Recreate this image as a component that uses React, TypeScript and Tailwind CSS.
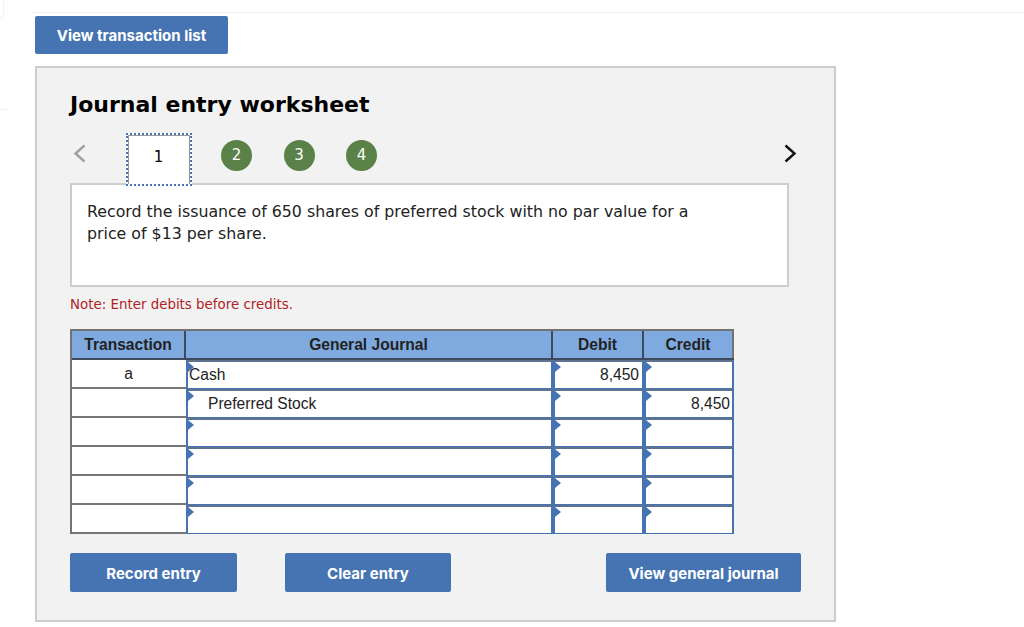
const rows = [
  { tx: "a", account: "Cash", indent: false, debit: "8,450", credit: "" },
  { tx: "", account: "Preferred Stock", indent: true, debit: "", credit: "8,450" },
  { tx: "", account: "", indent: false, debit: "", credit: "" },
  { tx: "", account: "", indent: false, debit: "", credit: "" },
  { tx: "", account: "", indent: false, debit: "", credit: "" },
  { tx: "", account: "", indent: false, debit: "", credit: "" },
];

function Cell({ children, className }: { children?: React.ReactNode; className: string }) {
  return (
    <div
      className={`relative h-[29px] border-x-2 border-b border-t-2 border-[#4674b3] border-t-[#5f7391] bg-white text-[15.6px] leading-[25px] text-[#222] ${className}`}
    >
      <span className="absolute left-0 top-0 h-0 w-0 border-y-[5px] border-l-[6px] border-y-transparent border-l-[#4674b3]" />
      {children}
    </div>
  );
}

function Circle({ n }: { n: number }) {
  return (
    <div className="flex h-[31px] w-[31px] items-center justify-center rounded-full bg-[#5a8147] text-[15px] text-white">
      {n}
    </div>
  );
}

function Button({ label, width }: { label: string; width: string }) {
  return (
    <button className={`flex h-[39px] ${width} items-center justify-center rounded-[2px] bg-[#4674b3] pt-[3px] font-['Inter',sans-serif] text-[15px] font-bold text-white`}>
      {label}
    </button>
  );
}

export default function App() {
  return (
    <div className="relative h-[627px] w-[1024px] overflow-hidden bg-white font-['DejaVu_Sans',sans-serif]">
      {/* leftovers of the page chrome */}
      <div className="absolute -left-[8px] -top-[8px] h-[28px] w-[12px] rounded-[4px] border border-[#f2f2f2]" />
      <div className="absolute left-0 top-[109px] h-px w-[7px] bg-[#f0f0f0]" />

      <div className="ml-[31px] pt-[12px]">
        <div className="h-px bg-[#eeeeee]" />
      </div>

      <div className="ml-[35px] mt-[3px] w-[801px]">
        <button className="flex h-[38px] w-[193px] items-center justify-center rounded-[2px] bg-[#4674b3] pt-[3px] font-['Inter',sans-serif] text-[15px] font-bold text-white">
          View transaction list
        </button>

        <div className="mt-[12px] h-[556px] border-2 border-[#cdcdcd] bg-[#f2f2f2] pl-[33px]">
          <h1 className="pt-[23px] text-[22px] font-bold leading-[28px] text-black">Journal entry worksheet</h1>

          <div className="relative mt-[14px] flex h-[53px] items-center">
            <svg className="ml-[3px] mb-[12px] h-[19px] w-[13px]" viewBox="0 0 13 19" fill="none" stroke="#a0a0a0" strokeWidth="2.4">
              <path d="M11.5 1.5 2.5 9.5l9 8" />
            </svg>
            <div className="relative z-10 ml-[40px] flex h-[53px] w-[66px] items-center justify-center border-[2px] border-dotted border-[#4674b3] bg-white pb-[5px] pr-px text-[15px] text-black">
              <div className="absolute inset-0 border-x border-t border-[#9a9a9a]" />
              1
            </div>
            <div className="relative z-10 ml-[29px] mb-[9px] flex gap-[31.5px]">
              <Circle n={2} />
              <Circle n={3} />
              <Circle n={4} />
            </div>
            <svg className="ml-auto mr-[37px] mb-[12px] h-[19px] w-[13px]" viewBox="0 0 13 19" fill="none" stroke="#111" strokeWidth="2.4">
              <path d="M1.5 1.5 10.5 9.5l-9 8" />
            </svg>
          </div>

          <div className="-mt-[3px] h-[104px] w-[719px] border-2 border-[#cdcdcd] bg-white px-[15px] pt-[16px] text-[15.8px] leading-[22px] text-[#222]">
            Record the issuance of 650 shares of preferred stock with no par value for a
            <br />
            price of $13 per share.
          </div>

          <p className="mt-[9px] text-[13.4px] leading-[18px] text-[#b0231f]">Note: Enter debits before credits.</p>

          <div className="mt-[15px] w-[664px] border-l-2 border-l-[#737373] font-['Liberation_Sans',sans-serif]">
            <div className="grid grid-cols-[114px_367px_91px_90px] border-b-2 border-t-2 border-b-[#3d4a5c] border-t-[#737373] bg-[#7faae0] text-center text-[15.6px] font-bold leading-[26px] text-[#222]">
              <div className="h-[27px] border-r-2 border-[#3d4a5c] pt-px">Transaction</div>
              <div className="h-[27px] border-r-2 border-[#3d4a5c] pt-px">General Journal</div>
              <div className="h-[27px] border-r-2 border-[#3d4a5c] pt-px">Debit</div>
              <div className="h-[27px] border-r-2 border-[#737373] pt-px">Credit</div>
            </div>
            {rows.map((row, i) => (
              <div key={i} className="grid grid-cols-[114px_367px_91px_90px]">
                <div className="h-[29px] border-b-2 border-[#777] bg-white pr-px text-center text-[15.6px] leading-[28px] text-[#222]">
                  {row.tx}
                </div>
                <Cell className="pl-px">
                  <span className={row.indent ? "pl-[19px]" : ""}>{row.account}</span>
                </Cell>
                <Cell className="pr-[3px] text-right">{row.debit}</Cell>
                <Cell className="pr-[2px] text-right">{row.credit}</Cell>
              </div>
            ))}
          </div>

          <div className="mt-[19px] flex w-[731px]">
            <Button label="Record entry" width="w-[167px]" />
            <div className="ml-[48px]">
              <Button label="Clear entry" width="w-[166px]" />
            </div>
            <div className="ml-auto">
              <Button label="View general journal" width="w-[195px]" />
            </div>
          </div>
        </div>
      </div>
    </div>
  );
}
